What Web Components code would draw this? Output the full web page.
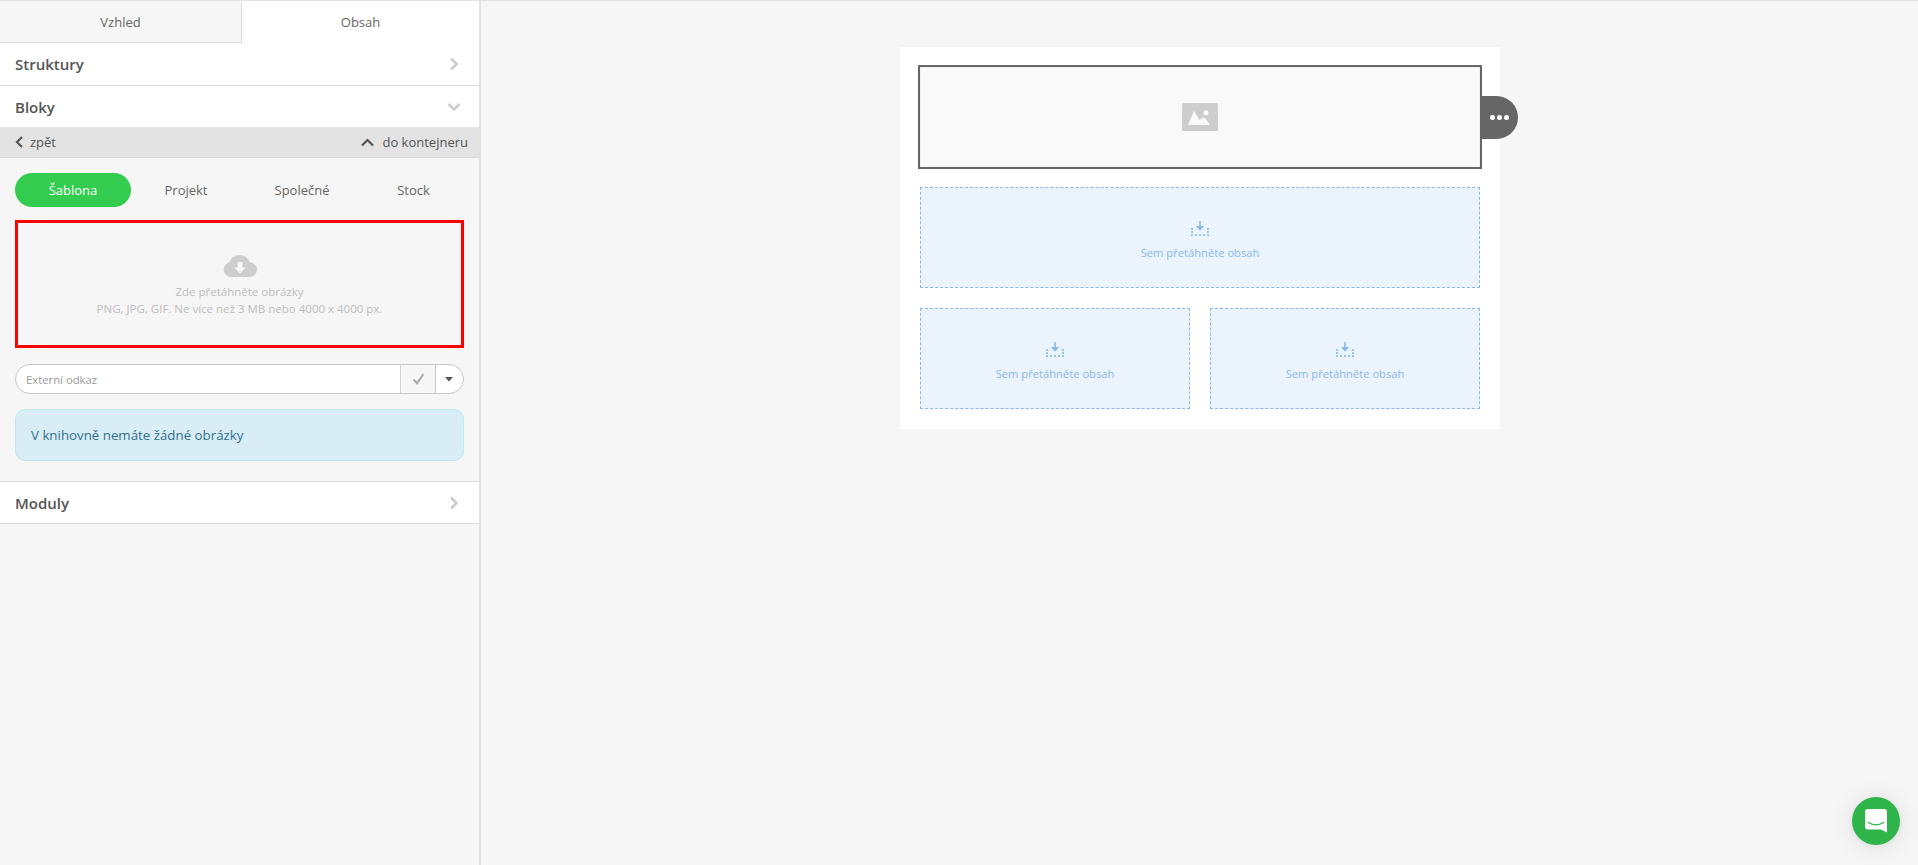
<!DOCTYPE html>
<html lang="cs">
<head>
<meta charset="utf-8">
<title>Editor</title>
<style>
    html, body { margin: 0; height: 100%; overflow: hidden; }
    body { background: #f6f6f6; font-family: 'Open Sans', sans-serif; color: #555; }
    .app { display: flex; height: 865px; box-sizing: border-box; border-top: 1px solid #e2e2e2; }
</style>
</head>
<body>
<div class="app">
    <editor-sidebar>
        <side-tabs></side-tabs>
        <side-section label="Struktury" icon="right"></side-section>
        <side-section label="Bloky" icon="down" open></side-section>
        <sub-bar></sub-bar>
        <blocks-panel>
            <pill-tabs></pill-tabs>
            <upload-zone></upload-zone>
            <link-input></link-input>
            <info-box>V knihovně nemáte žádné obrázky</info-box>
        </blocks-panel>
        <side-section label="Moduly" icon="right" topline></side-section>
    </editor-sidebar>
    <editor-canvas>
        <image-block></image-block>
        <drop-slot></drop-slot>
        <drop-row>
            <drop-slot></drop-slot>
            <drop-slot></drop-slot>
        </drop-row>
    </editor-canvas>
</div>
<chat-launcher></chat-launcher>

<script>
// small helper so every element looks the same
class ShadowEl extends HTMLElement {
    constructor() {
        super();
        this.attachShadow({ mode: 'open' });
    }
    connectedCallback() {
        this.shadowRoot.innerHTML = this.render();
    }
}

const chevrons = {
    right: '<svg width="10" height="14" viewBox="0 0 10 14"><path d="M2 1.500 7.500 7 2 12.500" fill="none" stroke="#cdcdcd" stroke-width="2.600"/></svg>',
    down: '<svg width="14" height="10" viewBox="0 0 14 10"><path d="M1.500 2 7 7.500 12.500 2" fill="none" stroke="#cdcdcd" stroke-width="2.600"/></svg>'
};

class EditorSidebar extends ShadowEl {
    render() {
        return `
            <style>
                :host { display: flex; flex-direction: column; width: 481px; flex: none; box-sizing: border-box; border-right: 2px solid #e2e2e2; }
            </style>
            <slot></slot>
        `;
    }
}

class SideTabs extends ShadowEl {
    render() {
        return `
            <style>
                :host { display: flex; height: 42px; font-size: 13px; color: #666; }
                div { flex: 1; display: flex; align-items: center; justify-content: center; box-sizing: border-box; }
                .off { border-bottom: 1px solid #dcdcdc; border-right: 1px solid #dcdcdc; flex: none; width: 242px; }
                .on { background: #fff; }
            </style>
            <div class="off">Vzhled</div>
            <div class="on">Obsah</div>
        `;
    }
}

class SideSection extends ShadowEl {
    render() {
        const icon = chevrons[this.getAttribute('icon')];
        const top = this.hasAttribute('topline') ? 'border-top: 1px solid #dcdcdc;' : '';
        // the open section runs straight into the grey bar below it
        const rest = this.hasAttribute('open') ? 'height: 41px;' : 'border-bottom: 1px solid #dcdcdc;';
        return `
            <style>
                :host { display: flex; align-items: center; justify-content: space-between; height: 43px; box-sizing: border-box; padding: 0 18px 0 15px; background: #fff; ${top} ${rest} font-size: 15px; font-weight: 600; color: #555; }
                .ic { display: flex; width: 14px; justify-content: center; }
            </style>
            <span>${this.getAttribute('label')}</span>
            <span class="ic">${icon}</span>
        `;
    }
}

class SubBar extends ShadowEl {
    render() {
        return `
            <style>
                :host { display: flex; align-items: center; justify-content: space-between; height: 31px; box-sizing: border-box; padding: 0 11px 0 15px; background: #e3e3e3; border-bottom: 1px solid #dcdcdc; font-size: 13px; color: #555; }
                span { display: flex; align-items: center; }
                svg { display: block; }
            </style>
            <span><svg width="9" height="12" viewBox="0 0 9 12" style="margin-right:6px"><path d="M7 1 2 6l5 5" fill="none" stroke="#555" stroke-width="2.200"/></svg>zpět</span>
            <span><svg width="13" height="9" viewBox="0 0 13 9" style="margin-right:8px"><path d="M1 7.500l5.500-5.500L12 7.500" fill="none" stroke="#555" stroke-width="2.200"/></svg>do kontejneru</span>
        `;
    }
}

class BlocksPanel extends ShadowEl {
    render() {
        return `
            <style>
                :host { display: flex; flex-direction: column; padding: 15px 15px 20px; }
            </style>
            <slot></slot>
        `;
    }
}

class PillTabs extends ShadowEl {
    render() {
        return `
            <style>
                :host { display: grid; grid-template-columns: 116px 110px 122px 101px; height: 34px; margin-bottom: 13px; font-size: 13px; color: #666; }
                div { display: flex; align-items: center; justify-content: center; }
                .on { background: #33cc4f; color: #fff; border-radius: 17px; }
            </style>
            <div class="on">Šablona</div>
            <div>Projekt</div>
            <div>Společné</div>
            <div>Stock</div>
        `;
    }
}

class UploadZone extends ShadowEl {
    render() {
        return `
            <style>
                :host { display: flex; flex-direction: column; align-items: center; height: 128px; box-sizing: border-box; padding-top: 32px; margin-bottom: 16px; border: 3px solid #f00; font-size: 11.500px; line-height: 17px; color: #bdbdbd; text-align: center; }
                svg { display: block; margin-bottom: 6px; }
            </style>
            <svg width="34" height="22" viewBox="0 0 34 22">
                <path d="M8 22a7.500 7.500 0 0 1-1.600-14.800C7.800 3 11.800 0 16.500 0c4.700 0 8.600 2.800 10 6.900 4 .3 7.500 3.600 7.500 7.600 0 4.200-3.500 7.500-7.700 7.500z" fill="#cdcdcd"/>
                <path d="M14.500 7h5v5.500h3.500L17 18.500l-6-6h3.500z" fill="#f6f6f6"/>
            </svg>
            <div>Zde přetáhněte obrázky</div>
            <div>PNG, JPG, GIF. Ne více než 3 MB nebo 4000 x 4000 px.</div>
        `;
    }
}

class LinkInput extends ShadowEl {
    render() {
        return `
            <style>
                :host { display: flex; height: 30px; box-sizing: border-box; margin-bottom: 15px; border: 1px solid #c8c8c8; border-radius: 15px; overflow: hidden; background: #fff; font-size: 11.300px; color: #999; }
                .field { flex: 1; display: flex; align-items: center; padding-left: 10px; }
                .ok { width: 34px; display: flex; align-items: center; justify-content: center; background: #f7f7f7; border-left: 1px solid #d5d5d5; }
                .more { width: 28px; display: flex; align-items: center; justify-content: center; border-left: 1px solid #c8c8c8; padding-right: 1px; box-sizing: border-box; }
            </style>
            <div class="field">Externí odkaz</div>
            <div class="ok"><svg width="13" height="12" viewBox="0 0 13 12"><path d="M1.500 6.500 5 10.300 11.500 1" fill="none" stroke="#aaa" stroke-width="2"/></svg></div>
            <div class="more"><svg width="8" height="5" viewBox="0 0 8 5"><path d="M0 0h8L4 4.500z" fill="#555"/></svg></div>
        `;
    }
}

class InfoBox extends ShadowEl {
    render() {
        return `
            <style>
                :host { display: flex; align-items: center; height: 52px; box-sizing: border-box; padding: 0 15px; background: #d9edf7; border: 1px solid #bce8f1; border-radius: 10px; font-size: 13.300px; color: #31708f; }
            </style>
            <slot></slot>
        `;
    }
}

class EditorCanvas extends ShadowEl {
    render() {
        return `
            <style>
                :host { display: block; flex: 1; padding-top: 46px; }
                .page { display: flex; flex-direction: column; gap: 20px; box-sizing: border-box; width: 600px; height: 382px; margin-left: 419px; padding: 18px 20px 20px; background: #fff; }
            </style>
            <div class="page"><slot></slot></div>
        `;
    }
}

class ImageBlock extends ShadowEl {
    render() {
        return `
            <style>
                :host { display: flex; align-items: center; justify-content: center; position: relative; height: 104px; margin: 0 -2px -2px; box-sizing: border-box; background: #f9f9f9; border: 2px solid #666; box-shadow: inset 0 0 0 1px #f1f1f1; }
                svg { display: block; }
                .handle { position: absolute; left: calc(100% + 2px); top: 29px; width: 36px; height: 43px; display: flex; align-items: center; justify-content: center; gap: 2px; box-sizing: border-box; padding-right: 1px; background: #666; border-radius: 0 21.500px 21.500px 0; }
                .handle i { width: 5px; height: 5px; border-radius: 50%; background: #fff; }
            </style>
            <svg width="36" height="28" viewBox="0 0 36 28">
                <rect width="36" height="28" rx="1.500" fill="#cdcdcd"/>
                <path d="M6 22 12 7.700l5.500 9.300 3.500-2.800 3 1.800 4 6z" fill="#f9f9f9"/>
                <circle cx="24" cy="9.700" r="2.500" fill="#f9f9f9"/>
            </svg>
            <div class="handle"><i></i><i></i><i></i></div>
        `;
    }
}

class DropSlot extends ShadowEl {
    render() {
        return `
            <style>
                :host { display: flex; flex: 1; flex-direction: column; align-items: center; height: 101px; box-sizing: border-box; padding-top: 33px; background: #ebf3fc; border: 1px dashed #8ab8ee; font-size: 11.200px; line-height: 16px; color: #8ab8ee; }
                svg { display: block; margin-bottom: 9px; }
            </style>
            <svg width="18" height="15" viewBox="0 0 18 15" fill="#8ab8ee">
                <path d="M8.200 0h1.600v5H13L9 9.700 5 5h3.200z"/>
                <g opacity=".8">
                    <rect x="0" y="13" width="2" height="2"/><rect x="4" y="13" width="2" height="2"/><rect x="8" y="13" width="2" height="2"/><rect x="12" y="13" width="2" height="2"/><rect x="16" y="13" width="2" height="2"/>
                    <rect x="0" y="7" width="2" height="2"/><rect x="0" y="10" width="2" height="2"/>
                    <rect x="16" y="7" width="2" height="2"/><rect x="16" y="10" width="2" height="2"/>
                </g>
            </svg>
            <div>Sem přetáhněte obsah</div>
        `;
    }
}

class DropRow extends ShadowEl {
    render() {
        return `
            <style>
                :host { display: flex; gap: 20px; }
            </style>
            <slot></slot>
        `;
    }
}

class ChatLauncher extends ShadowEl {
    render() {
        return `
            <style>
                :host { position: fixed; left: 1852px; top: 797px; width: 48px; height: 48px; display: flex; align-items: center; justify-content: center; border-radius: 50%; background: #2fb44a; box-shadow: 0 1px 6px rgba(0,0,0,.06), 0 2px 24px rgba(0,0,0,.10); }
                svg { display: block; }
            </style>
            <svg width="22" height="24" viewBox="0 0 22 24">
                <path d="M3 0h16a3 3 0 0 1 3 3v20.500L16 20.500H3a3 3 0 0 1-3-3V3a3 3 0 0 1 3-3z" fill="#fff"/>
                <path d="M3.500 13.500c4.500 3 10.500 3 15 0" fill="none" stroke="#2fb44a" stroke-width="1.500" stroke-linecap="round"/>
            </svg>
        `;
    }
}

customElements.define('editor-sidebar', EditorSidebar);
customElements.define('side-tabs', SideTabs);
customElements.define('side-section', SideSection);
customElements.define('sub-bar', SubBar);
customElements.define('blocks-panel', BlocksPanel);
customElements.define('pill-tabs', PillTabs);
customElements.define('upload-zone', UploadZone);
customElements.define('link-input', LinkInput);
customElements.define('info-box', InfoBox);
customElements.define('editor-canvas', EditorCanvas);
customElements.define('image-block', ImageBlock);
customElements.define('drop-slot', DropSlot);
customElements.define('drop-row', DropRow);
customElements.define('chat-launcher', ChatLauncher);
</script>
</body>
</html>
